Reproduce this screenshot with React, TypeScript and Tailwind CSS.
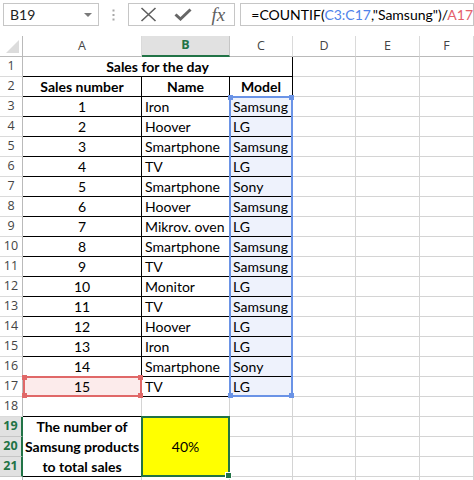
import React from "react";

const data: [number, string, string][] = [
  [1, "Iron", "Samsung"],
  [2, "Hoover", "LG"],
  [3, "Smartphone", "Samsung"],
  [4, "TV", "LG"],
  [5, "Smartphone", "Sony"],
  [6, "Hoover", "Samsung"],
  [7, "Mikrov. oven", "LG"],
  [8, "Smartphone", "Samsung"],
  [9, "TV", "Samsung"],
  [10, "Monitor", "LG"],
  [11, "TV", "Samsung"],
  [12, "Hoover", "LG"],
  [13, "Iron", "LG"],
  [14, "Smartphone", "Sony"],
  [15, "TV", "LG"],
];

const cellFont = "[font-family:Lato,Carlito,sans-serif] text-[14px] text-black leading-[19px]";
const hdrFont = "[font-family:'Open_Sans','Noto_Sans',sans-serif] text-[12.5px]";

function RowHdr({ n, sel }: { n?: number; sel?: boolean }) {
  return sel ? (
    <div className={`${hdrFont} flex items-center justify-center border-b border-b-[#c6c6c6] border-r-2 border-r-[#217346] bg-[#e1e1e1] font-bold text-[#217346]`}>
      {n}
    </div>
  ) : (
    <div className={`${hdrFont} flex items-center justify-center border-b border-r border-b-[#dadada] border-r-[#bababa] bg-white text-[#444]`}>
      {n}
    </div>
  );
}

function Gray() {
  return <div className="border-r border-b border-[#d4d4d4]" />;
}

function Squares({ color }: { color: string }) {
  const base = "absolute h-[5px] w-[5px]";
  return (
    <>
      <div className={`${base} -left-[3px] -top-[3px]`} style={{ background: color }} />
      <div className={`${base} -right-[3px] -top-[3px]`} style={{ background: color }} />
      <div className={`${base} -left-[3px] -bottom-[3px]`} style={{ background: color }} />
      <div className={`${base} -right-[3px] -bottom-[3px]`} style={{ background: color }} />
    </>
  );
}

export default function App() {
  return (
    <div className="h-[480px] w-[474px] overflow-hidden bg-white">
      {/* Formula bar */}
      <div className="flex h-[36px] items-start pt-[3px]">
        <div className="ml-[3px] flex h-[23px] w-[101px] items-center border border-[#c6c6c6] pl-[6px] pr-[6px]">
          <span className="flex-1 [font-family:Lato,Carlito,sans-serif] text-[14px] text-[#222]">B19</span>
          <svg width="8" height="5" viewBox="0 0 8 5" className="mt-[1px]">
            <path d="M0 0 L8 0 L4 4 Z" fill="#7a7a7a" />
          </svg>
        </div>
        <div className="flex h-[23px] w-[31px] items-center justify-center">
          <svg width="3" height="12" viewBox="0 0 3 12">
            <rect x="0.5" y="0.5" width="2" height="2" fill="#a8a8a8" />
            <rect x="0.5" y="5" width="2" height="2" fill="#a8a8a8" />
            <rect x="0.5" y="9.5" width="2" height="2" fill="#a8a8a8" />
          </svg>
        </div>
        <div className="flex h-[23px] w-[107px] items-center border border-[#c6c6c6]">
          <div className="flex w-[35px] justify-center pl-[3px]">
            <svg width="17" height="15" viewBox="0 0 17 15">
              <path d="M1.5 1 L15.5 14 M15.5 1 L1.5 14" stroke="#5f5f5f" strokeWidth="1.6" fill="none" />
            </svg>
          </div>
          <div className="flex w-[38px] justify-center">
            <svg width="18" height="13" viewBox="0 0 18 13">
              <path d="M1.5 6.5 L6.5 11 L16.5 1.5" stroke="#666" strokeWidth="3" fill="none" />
            </svg>
          </div>
          <div className="flex w-[32px] justify-center">
            <span className="[font-family:'Liberation_Serif',serif] text-[19px] italic leading-none text-[#5f5f5f]">fx</span>
          </div>
        </div>
        <div className="ml-[5px] flex h-[23px] w-[240px] items-center border border-[#c6c6c6] pl-[10px]">
          <span className="whitespace-nowrap [font-family:Lato,Carlito,sans-serif] text-[14px] text-black">
            =COUNTIF(<span className="text-[#4f83ea]">C3:C17</span>,"Samsung")/<span className="text-[#e4606a]">A17</span>
          </span>
        </div>
      </div>

      {/* Sheet */}
      <div className="relative grid grid-cols-[23px_119px_88px_63px_63px_64px_1fr] grid-rows-[21px_repeat(22,20px)]">
        {/* header row */}
        <div className="relative border-r border-b border-[#bababa] bg-white">
          <svg width="13" height="13" viewBox="0 0 13 13" className="absolute bottom-[3px] right-[3px]">
            <path d="M13 0 L13 13 L0 13 Z" fill="#dcdcdc" />
          </svg>
        </div>
        <div className={`${hdrFont} flex items-center justify-center border-r border-b border-r-[#dadada] border-b-[#bababa] text-[#444]`}>A</div>
        <div className={`${hdrFont} flex items-center justify-center border-r border-b-2 border-r-[#c6c6c6] border-b-[#217346] bg-[#e1e1e1] font-bold text-[#217346]`}>B</div>
        <div className={`${hdrFont} flex items-center justify-center border-r border-b border-r-[#dadada] border-b-[#bababa] text-[#444]`}>C</div>
        <div className={`${hdrFont} flex items-center justify-center border-r border-b border-r-[#dadada] border-b-[#bababa] text-[#444]`}>D</div>
        <div className={`${hdrFont} flex items-center justify-center border-r border-b border-r-[#dadada] border-b-[#bababa] text-[#444]`}>E</div>
        <div className={`${hdrFont} flex items-center justify-center border-r border-b border-r-[#dadada] border-b-[#bababa] text-[#444]`}>F</div>

        {/* row 1 */}
        <RowHdr n={1} />
        <div className={`${cellFont} col-span-3 border-r border-b border-black text-center font-bold`}>Sales for the day</div>
        <Gray />
        <Gray />
        <Gray />

        {/* row 2 */}
        <RowHdr n={2} />
        <div className={`${cellFont} border-r border-b border-black text-center font-bold`}>Sales number</div>
        <div className={`${cellFont} border-r border-b border-black text-center font-bold`}>Name</div>
        <div className={`${cellFont} border-r border-b border-black text-center font-bold`}>Model</div>
        <Gray />
        <Gray />
        <Gray />

        {data.map(([n, name, model], i) => (
          <React.Fragment key={n}>
            <RowHdr n={i + 3} />
            <div className={`${cellFont} border-r border-b border-black text-center ${n === 15 ? "bg-[#fcebeb]" : ""}`}>{n}</div>
            <div className={`${cellFont} overflow-hidden whitespace-nowrap border-r border-b border-black px-[3px]`}>{name}</div>
            <div className={`${cellFont} overflow-hidden whitespace-nowrap border-r border-b border-black bg-[#eef2fc] px-[3px]`}>{model}</div>
            <Gray />
            <Gray />
            <Gray />
          </React.Fragment>
        ))}

        {/* row 18 */}
        <RowHdr n={18} />
        <div className="border-r border-b border-r-[#d4d4d4] border-b-black" />
        <Gray />
        <Gray />
        <Gray />
        <Gray />
        <Gray />

        {/* rows 19-21 */}
        <RowHdr n={19} sel />
        <div className={`${cellFont} row-span-3 flex items-center justify-center border-r border-b border-black text-center font-bold leading-[20px]`}>
          <div>
            The number of
            <br />
            Samsung products
            <br />
            to total sales
          </div>
        </div>
        <div className={`${cellFont} row-span-3 flex items-center justify-center border-r border-b border-black bg-[#ffff00]`}>40%</div>
        <Gray />
        <Gray />
        <Gray />
        <Gray />
        <RowHdr n={20} sel />
        <Gray />
        <Gray />
        <Gray />
        <Gray />
        <RowHdr n={21} sel />
        <Gray />
        <Gray />
        <Gray />
        <Gray />

        {/* row 22 (mostly off-screen) */}
        <RowHdr />
        <Gray />
        <Gray />
        <Gray />
        <Gray />
        <Gray />
        <Gray />

        {/* Overlays */}
        <div className="pointer-events-none absolute col-start-4 col-end-5 row-start-4 row-end-19 -left-px -top-px right-0 bottom-0 border-2 border-[#6a93e6]">
          <Squares color="#6a93e6" />
        </div>
        <div className="pointer-events-none absolute col-start-2 col-end-3 row-start-18 row-end-19 left-0 -top-px right-0 bottom-0 border-2 border-[#e06868]">
          <Squares color="#e06868" />
        </div>
        <div className="pointer-events-none absolute col-start-3 col-end-4 row-start-20 row-end-23 -left-px -top-px right-0 bottom-0 border-2 border-[#217346]">
          <div className="absolute -bottom-[4px] -right-[4px] h-[7px] w-[7px] border border-white bg-[#217346]" />
        </div>
      </div>
    </div>
  );
}
